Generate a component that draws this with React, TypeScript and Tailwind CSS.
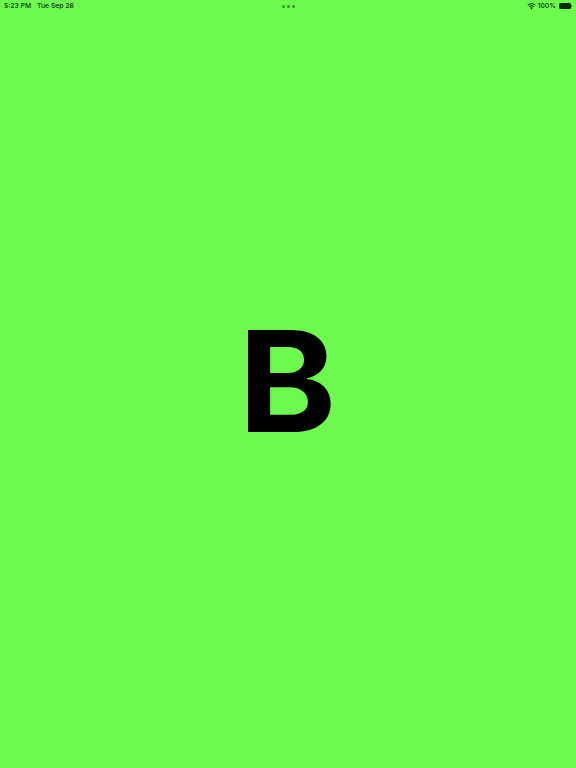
export default function App() {
  return (
    <div className="h-[768px] w-[576px] bg-[#6df94d] flex flex-col overflow-hidden text-black" style={{ fontFamily: "Inter, 'Liberation Sans', sans-serif" }}>
      <div className="h-[12px] flex items-center justify-between pl-[4px] pr-[4px] text-[6.8px] font-medium leading-none text-[#0b2a05]">
        <div className="flex gap-[6px] w-[120px]">
          <span>5:23 PM</span>
          <span>Tue Sep 26</span>
        </div>
        <div className="flex gap-[2px]">
          <span className="w-[3px] h-[3px] rounded-full bg-[#2f9a1d]"></span>
          <span className="w-[3px] h-[3px] rounded-full bg-[#2f9a1d]"></span>
          <span className="w-[3px] h-[3px] rounded-full bg-[#2f9a1d]"></span>
        </div>
        <div className="flex items-center justify-end gap-[2px] w-[120px]">
          <svg width="9" height="7" viewBox="0 0 18 14" fill="#0b2a05">
            <path d="M9 2.6c2.6 0 5 1 6.8 2.7l1.2-1.3C14.9 1.9 12 .7 9 .7S3.100 1.900 1 4l1.200 1.300C4 3.600 6.400 2.600 9 2.600z" />
            <path d="M9 6.600c1.500 0 2.900.6 4 1.600l1.300-1.300C12.900 5.500 11 4.700 9 4.700S5.100 5.500 3.700 6.900L5 8.200c1.100-1 2.500-1.600 4-1.600z" />
            <path d="M9 8.700c-1 0-1.900.4-2.600 1L9 13.300l2.600-3.600c-.7-.6-1.600-1-2.600-1z" />
          </svg>
          <span>100%</span>
          <div className="flex items-center ml-[1px]">
            <div className="w-[12px] h-[6px] rounded-[1.500px] bg-[#0b2a05]"></div>
            <div className="w-[1px] h-[2px] bg-[#3c7a2a]"></div>
          </div>
        </div>
      </div>
      <div className="flex-1 flex items-center justify-center pb-[18px]">
        <span className="text-[140px] font-bold leading-none pr-[1px] scale-x-[1.06]">B</span>
      </div>
    </div>
  );
}
